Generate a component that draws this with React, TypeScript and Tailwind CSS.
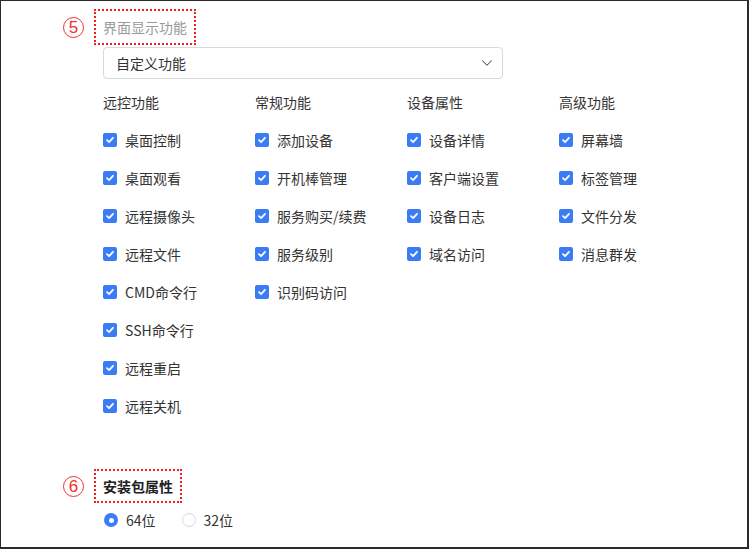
import React from "react";
import { ChevronDown } from "lucide-react";

const cols: { title: string; items: string[] }[] = [
  { title: "远控功能", items: ["桌面控制", "桌面观看", "远程摄像头", "远程文件", "CMD命令行", "SSH命令行", "远程重启", "远程关机"] },
  { title: "常规功能", items: ["添加设备", "开机棒管理", "服务购买/续费", "服务级别", "识别码访问"] },
  { title: "设备属性", items: ["设备详情", "客户端设置", "设备日志", "域名访问"] },
  { title: "高级功能", items: ["屏幕墙", "标签管理", "文件分发", "消息群发"] },
];

function Check() {
  return (
    <span className="flex h-[14px] w-[14px] items-center justify-center rounded-[2px] bg-[#3a7bf6]">
      <svg width="10" height="10" viewBox="0 0 10 10">
        <path d="M2 5.2 L4.1 7.2 L8 2.8" fill="none" stroke="#fff" strokeWidth="1.8" strokeLinecap="round" strokeLinejoin="round" />
      </svg>
    </span>
  );
}

function Num({ n }: { n: string }) {
  return (
    <span className="mr-[10px] flex h-[21px] w-[21px] items-center justify-center rounded-full border border-[#f03030] text-[17px] leading-none text-[#f03030] font-['Liberation_Sans',sans-serif]">
      {n}
    </span>
  );
}

export default function App() {
  return (
    <div className="h-[550px] w-[750px] bg-white">
      <div className="h-[549px] w-[749px] border-l border-t border-r-2 border-b-2 border-[#2b2b2b] font-['Noto_Sans_CJK_SC',sans-serif] text-[14px] text-[#333]">
        <div className="pl-[62px] pt-[8px]">
          <div className="flex items-center">
            <Num n="5" />
            <div className="flex h-[36px] items-center border-2 border-dotted border-[#f02020] px-[7px] text-[#999] leading-[22px]">
              界面显示功能
            </div>
          </div>
          <div className="ml-[40px]">
            <div className="mt-[2px] flex h-[32px] w-[400px] items-center justify-between rounded-[4px] border border-[#d6d9de] pl-[12px] pr-[6px]">
              <span className="leading-[22px] text-[#333]">自定义功能</span>
              <ChevronDown size={18} strokeWidth={1.4} className="text-[#555]" />
            </div>
            <div className="mt-[12px] flex">
              {cols.map((c) => (
                <div key={c.title} className="w-[152px]">
                  <div className="h-[22px] leading-[22px] text-[#333]">{c.title}</div>
                  <div className="mt-[8px]">
                    {c.items.map((it) => (
                      <div key={it} className="flex h-[38px] items-center gap-[8px]">
                        <Check />
                        <span className="leading-[22px]">{it}</span>
                      </div>
                    ))}
                  </div>
                </div>
              ))}
            </div>
          </div>
          <div className="mt-[44px] flex items-center">
            <Num n="6" />
            <div className="flex h-[34px] items-center border-2 border-dotted border-[#f02020] px-[7px] font-bold leading-[22px] text-[#222]">
              安装包属性
            </div>
          </div>
          <div className="ml-[41px] mt-[6px] flex h-[22px] items-center">
            <span className="flex h-[14px] w-[14px] items-center justify-center rounded-full bg-[#3a7bf6]">
              <span className="h-[5px] w-[5px] rounded-full bg-white" />
            </span>
            <span className="ml-[8px] leading-[22px]">64位</span>
            <span className="ml-[26px] h-[14px] w-[14px] rounded-full border border-[#d9d9d9]" />
            <span className="ml-[8px] leading-[22px]">32位</span>
          </div>
        </div>
      </div>
    </div>
  );
}
